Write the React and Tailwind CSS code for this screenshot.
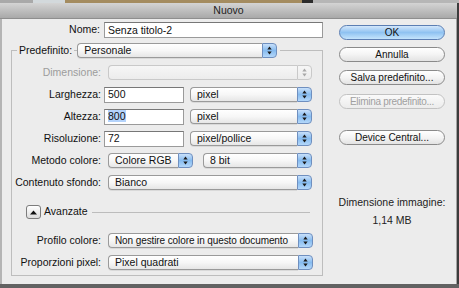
import React from "react";

const font = { fontFamily: '"Liberation Sans", Arial, sans-serif' };

function Arrows({ gray }) {
  const c = gray ? "#a8a8a8" : "#1a1a1a";
  return (
    <svg width="5" height="9" viewBox="0 0 5 9">
      <polygon points="0.3,3.6 2.5,0.6 4.7,3.6" fill={c} />
      <polygon points="0.3,5.4 2.5,8.4 4.7,5.4" fill={c} />
    </svg>
  );
}

function Select({ wClass, children, disabled, tight }) {
  return (
    <div className={`flex h-[15px] shrink-0 ${wClass}`}>
      <div
        className={
          disabled
            ? "flex-1 flex items-center pl-[6px] rounded-l-[4px] border border-r-0 border-[#c9c9c9] bg-gradient-to-b from-[#f6f6f6] to-[#ececec] text-[#999]"
            : "flex-1 min-w-0 overflow-hidden flex items-center pl-[6px] rounded-l-[4px] border border-r-0 border-[#9a9a9a] bg-gradient-to-b from-[#ffffff] via-[#f7f7f7] to-[#e6e6e6] text-[#111] shadow-[0_1px_0_rgba(0,0,0,0.08)]"
        }
      >
        <span className={tight ? "leading-[13px] whitespace-nowrap text-[10px] tracking-[-0.1px]" : "leading-[13px] whitespace-nowrap"}>
          {children}
        </span>
      </div>
      <div
        className={
          disabled
            ? "w-[15px] flex items-center justify-center rounded-r-[4px] border border-[#c9c9c9] bg-gradient-to-b from-[#f6f6f6] to-[#ececec]"
            : "w-[15px] shrink-0 flex items-center justify-center rounded-r-[4px] border border-[#6f8fbf] bg-gradient-to-b from-[#c8e0fa] via-[#86bbef] to-[#b4d8fa]"
        }
      >
        <Arrows gray={disabled} />
      </div>
    </div>
  );
}

function TextInput({ wClass, children }) {
  return (
    <div
      className={`h-[16px] shrink-0 flex items-center pl-[3px] bg-white border border-[#9a9a9a] border-t-[#777] ${wClass}`}
    >
      <span className="leading-[13px] text-[#111] whitespace-nowrap">{children}</span>
    </div>
  );
}

function Button({ children, primary, disabled }) {
  let cls =
    "h-[15px] w-[106px] flex items-center justify-center rounded-full border whitespace-nowrap leading-[13px] text-[10px] ";
  if (primary)
    cls +=
      "border-[#5b7eb3] bg-gradient-to-b from-[#d3e7fb] via-[#8fc2f1] to-[#c4e4fc] text-[#111]";
  else if (disabled)
    cls += "border-[#c2c2c2] bg-gradient-to-b from-[#fafafa] to-[#ececec] text-[#a0a0a0] tracking-[-0.3px]";
  else
    cls += "border-[#8a8a8a] bg-gradient-to-b from-[#ffffff] via-[#f4f4f4] to-[#e3e3e3] text-[#111]";
  return <div className={cls}>{children}</div>;
}

function Row({ label, disabled, children, gap = "gap-[3px]" }) {
  return (
    <div className={`flex items-center h-[15px] ${gap}`}>
      <div
        className={`w-[89px] shrink-0 text-right whitespace-nowrap ${disabled ? "text-[#9c9c9c]" : "text-[#111]"}`}
      >
        {label}
      </div>
      {children}
    </div>
  );
}

export default function App() {
  return (
    <div
      className="w-[459px] h-[288px] overflow-hidden flex flex-col bg-[#454545] text-[10.5px]"
      style={font}
    >
      {/* desktop strip top */}
      <div className="h-[3px] flex shrink-0">
        <div className="w-[33px] bg-[#a9a9a9]" />
        <div className="w-[32px] bg-[#d3d9dc]" />
        <div className="w-[237px] bg-[#a48c60]" />
        <div className="w-[11px] bg-[#2c2c2c]" />
        <div className="flex-1 bg-[#b6b6b6]" />
      </div>

      <div className="flex flex-1 min-h-0">
        {/* dialog */}
        <div className="w-[457px] flex flex-col">
          {/* title bar */}
          <div className="h-[16px] shrink-0 flex items-center justify-center bg-gradient-to-b from-[#d4d4d4] to-[#a9a9a9] border-b border-[#8e8e8e] text-[#222]">
            <span className="leading-[13px]">Nuovo</span>
          </div>

          {/* body */}
          <div className="flex-1 flex bg-[#ececec] border-l-[2px] border-l-[#b4b4b4] border-r border-r-[#a4a4a4]">
            {/* left column */}
            <div className="w-[322px] shrink-0 flex flex-col pt-[3px]">
              <div className="flex items-center h-[16px] gap-[4px]">
                <div className="w-[98px] text-right text-[#111]">Nome:</div>
                <TextInput wClass="w-[219px]">Senza titolo-2</TextInput>
              </div>

              {/* fieldset */}
              <div className="ml-[9px] mt-[12px] w-[312px] h-[226px] border border-[#bdbdbd] flex flex-col">
                <div className="flex items-center h-[15px] -mt-[8px]">
                  <div className="ml-[5px] px-[2px] bg-[#ececec] text-[#111] leading-[15px]">
                    Predefinito:
                  </div>
                  <div className="ml-[3px] pr-[3px] bg-[#ececec]">
                    <Select wClass="w-[200px]">Personale</Select>
                  </div>
                </div>

                <div className="mt-[7px] flex flex-col gap-[7px]">
                  <Row label="Dimensione:" disabled gap="gap-[7px]">
                    <Select wClass="w-[204px]" disabled>{""}</Select>
                  </Row>
                  <Row label="Larghezza:">
                    <TextInput wClass="w-[80px]">500</TextInput>
                    <div className="ml-[3px]">
                      <Select wClass="w-[122px]">pixel</Select>
                    </div>
                  </Row>
                  <Row label="Altezza:">
                    <TextInput wClass="w-[80px]">
                      <span className="bg-[#b4d3fb]">800</span>
                    </TextInput>
                    <div className="ml-[3px]">
                      <Select wClass="w-[122px]">pixel</Select>
                    </div>
                  </Row>
                  <Row label="Risoluzione:">
                    <TextInput wClass="w-[80px]">72</TextInput>
                    <div className="ml-[3px]">
                      <Select wClass="w-[122px]">pixel/pollice</Select>
                    </div>
                  </Row>
                  <Row label="Metodo colore:" gap="gap-[7px]">
                    <Select wClass="w-[85px]">Colore RGB</Select>
                    <div className="ml-[3px]">
                      <Select wClass="w-[109px]">8 bit</Select>
                    </div>
                  </Row>
                  <Row label="Contenuto sfondo:" gap="gap-[7px]">
                    <Select wClass="w-[204px]">Bianco</Select>
                  </Row>
                </div>

                {/* Avanzate */}
                <div className="mt-[15px] flex items-center h-[14px]">
                  <div className="ml-[14px] w-[15px] h-[14px] rounded-[3px] border border-[#7c7c7c] bg-gradient-to-b from-[#ffffff] to-[#dcdcdc] flex items-center justify-center">
                    <svg width="7" height="5" viewBox="0 0 7 5">
                      <polygon points="0,4.5 3.5,0.5 7,4.5" fill="#111" />
                    </svg>
                  </div>
                  <span className="ml-[3px] text-[#111]">Avanzate</span>
                  <div className="ml-[4px] mr-[12px] flex-1 h-[1px] bg-[#bcbcbc]" />
                </div>

                <div className="mt-[14px] flex flex-col gap-[7px]">
                  <Row label="Profilo colore:" gap="gap-[7px]">
                    <Select wClass="w-[205px]" tight>Non gestire colore in questo documento</Select>
                  </Row>
                  <Row label="Proporzioni pixel:" gap="gap-[7px]">
                    <Select wClass="w-[205px]">Pixel quadrati</Select>
                  </Row>
                </div>
              </div>
            </div>

            {/* right column */}
            <div className="ml-[15px] w-[106px] flex flex-col pt-[6px]">
              <Button primary>OK</Button>
              <div className="mt-[7px]">
                <Button>Annulla</Button>
              </div>
              <div className="mt-[8px]">
                <Button>Salva predefinito...</Button>
              </div>
              <div className="mt-[9px]">
                <Button disabled>Elimina predefinito...</Button>
              </div>
              <div className="mt-[21px]">
                <Button>Device Central...</Button>
              </div>
              <div className="mt-[51px] -mx-[6px] text-center text-[#222] leading-[13px] whitespace-nowrap">
                Dimensione immagine:
              </div>
              <div className="mt-[5px] text-center text-[#222] leading-[13px]">1,14 MB</div>
            </div>
          </div>
        </div>
        {/* right desktop strip */}
        <div className="flex-1 bg-[#3c3c3c]" />
      </div>

      {/* bottom desktop strip */}
      <div className="h-[4px] shrink-0 bg-[#626262]" />
    </div>
  );
}
